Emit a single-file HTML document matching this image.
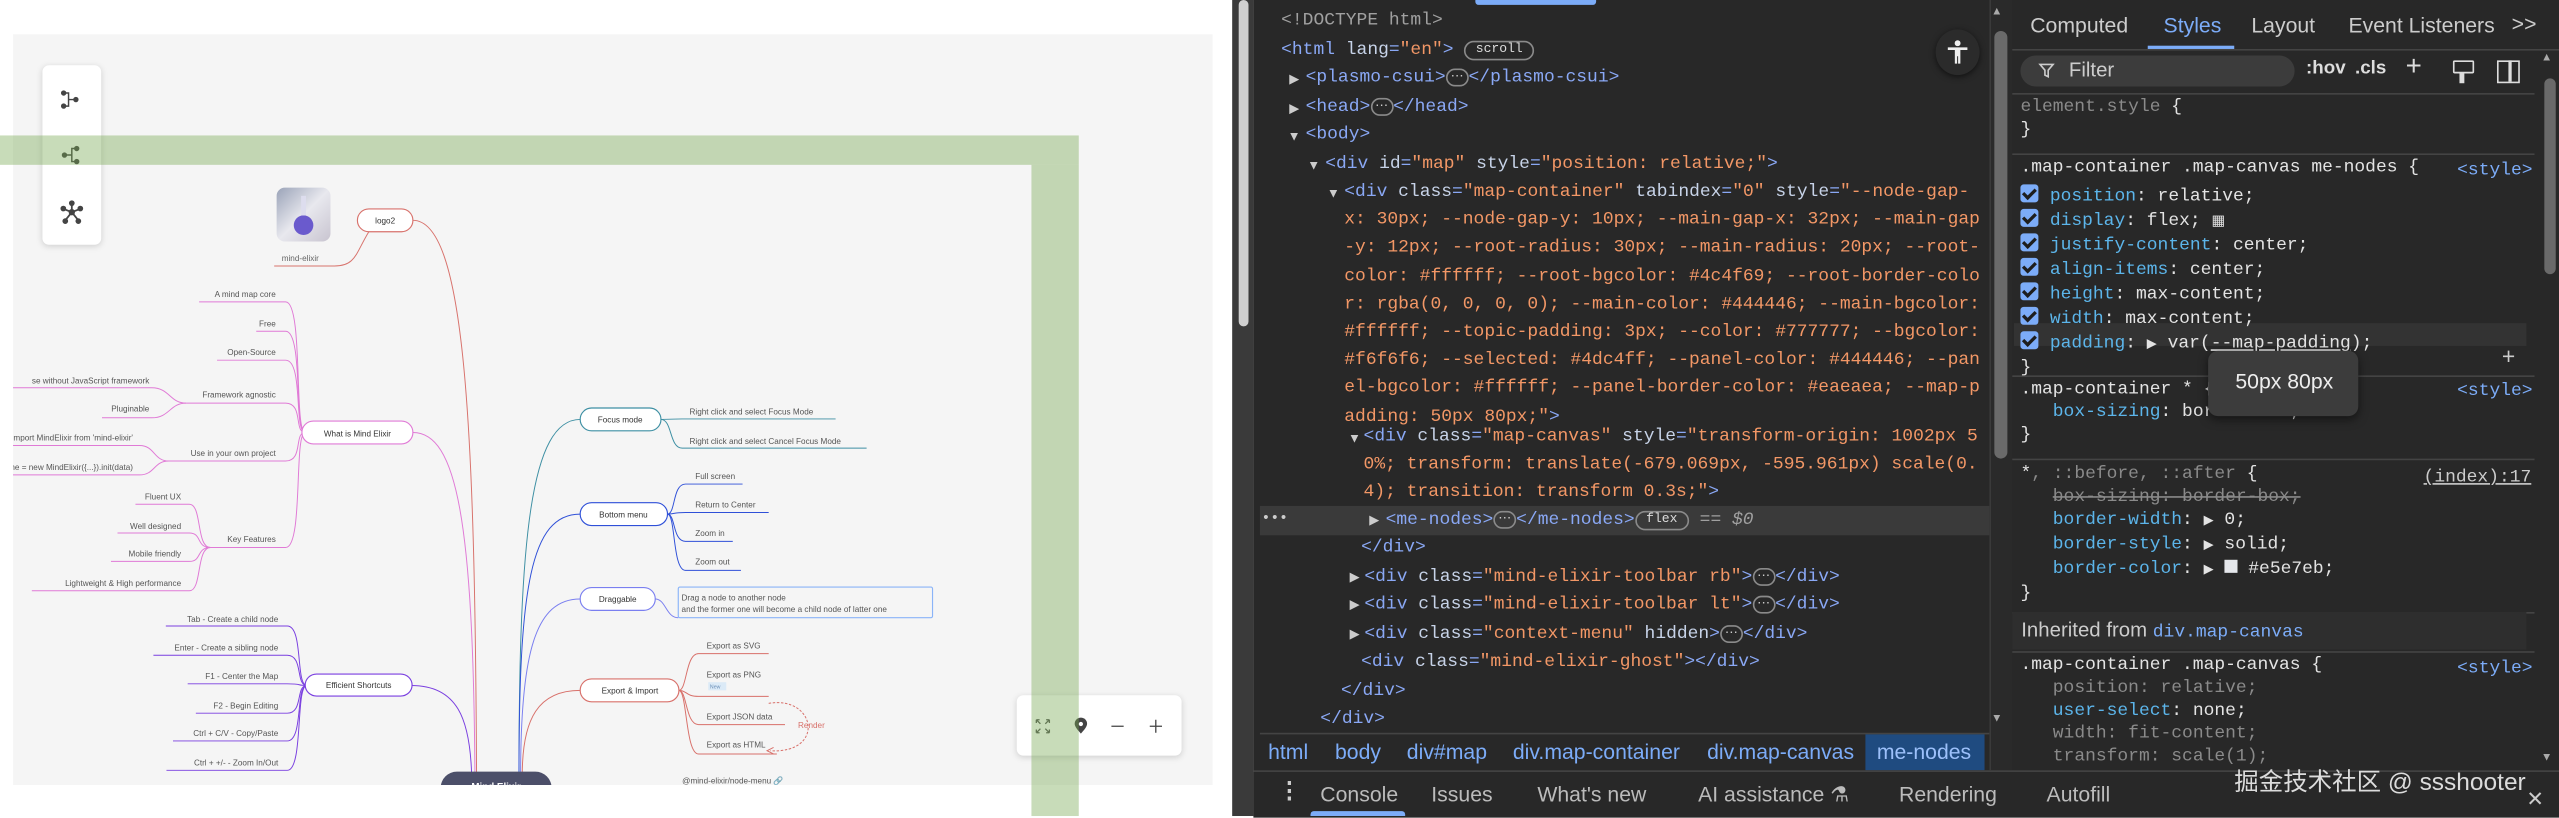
<!DOCTYPE html>
<html><head><meta charset="utf-8"><style>
html,body{margin:0;padding:0;width:2559px;height:816px;overflow:hidden;background:#fff}
#s{position:absolute;left:0;top:0;width:1568px;height:500px;transform:scale(1.63202);transform-origin:0 0;font-family:"Liberation Sans",sans-serif}
.a{position:absolute;white-space:pre}
.m{font-family:"Liberation Mono",monospace;font-size:11px;line-height:17.2px;color:#e3e3e3}
.t{color:#8aa8f5}.n{color:#c7d3e8}.v{color:#f29766}.g{color:#a0a0a0}
.b{display:inline-block;border:1px solid #8a8a8a;border-radius:7px;font-size:8px;line-height:9px;padding:0 2px;color:#ccc;vertical-align:1px}
.bd{display:inline-block;border:1px solid #8a8a8a;border-radius:7px;font-size:8px;line-height:10px;padding:0 6px;color:#ddd;vertical-align:1px}
.tri{position:absolute;font-size:8px;color:#ccc}
.sm{font-family:"Liberation Mono",monospace;font-size:11px;line-height:14px;color:#e3e3e3}
.p{color:#5cb5ea}.gr{color:#8a8a8a}
.cb{display:inline-block;width:11px;height:11px;background:#7cacf8;border-radius:2px;vertical-align:-1px;margin-right:7px;position:relative}
.cb:after{content:"";position:absolute;left:3px;top:1px;width:3px;height:6px;border:solid #1e1e1e;border-width:0 2px 2px 0;transform:rotate(45deg)}
.hr{position:absolute;left:1233px;width:320px;height:1px;background:#444}
</style></head><body><div id="s">
<!-- left page -->
<div class="a" style="left:0;top:0;width:757px;height:500px;background:#fff"></div>
<div class="a" style="left:8px;top:21px;width:735px;height:460px;background:#f5f5f5"></div>
<svg class="a" style="left:0;top:0" width="757" height="500" viewBox="0 0 757 500" font-family="Liberation Sans, sans-serif">
<defs><clipPath id="c"><rect x="8" y="21" width="735" height="460"/></clipPath></defs>
<g clip-path="url(#c)" fill="none" stroke-width="0.6">
<!-- main branches -->
<path d="M253,135 C285,135 291,260 292,475" stroke="#d8726c"/>
<path d="M253,265 C280,265 290,320 291,475" stroke="#e07ad6"/>
<path d="M252,420 C280,420 288,440 289,475" stroke="#7a3fe0"/>
<path d="M355.5,257 C325,257 318,330 318,475" stroke="#3d8fa3"/>
<path d="M355.5,315 C325,315 318,360 318,475" stroke="#2f50d8"/>
<path d="M355.5,367 C328,367 319,400 319,475" stroke="#7a7ff0"/>
<path d="M355.5,423 C330,423 320,440 320,475" stroke="#d8706a"/>
<!-- logo2 child -->
<path d="M226,142 C218,155 218,163 205,163 H168" stroke="#d8726c"/>
<!-- what is children -->
<g stroke="#e07ad6">
<path d="M187,265 C180,265 186,185 175,185 H122"/>
<path d="M187,265 C180,265 186,203 175,203 H157"/>
<path d="M187,265 C180,265 186,220.7 175,220.7 H133"/>
<path d="M187,265 C180,265 186,247 175,247 H114"/>
<path d="M187,265 C180,265 186,282.5 175,282.5 H103.5"/>
<path d="M187,265 C180,265 186,335.5 175,335.5 H129"/>
<path d="M114,247 C104,247 104,237.6 93,237.6 H0"/>
<path d="M114,247 C104,247 104,256 93,256 H62.5"/>
<path d="M103.5,282.5 C94,282.5 95,273 85.5,273 H0"/>
<path d="M103.5,282.5 C94,282.5 95,291 85.5,291 H0"/>
<path d="M129,335.5 C120,335.5 124,309 116,309 H83"/>
<path d="M129,335.5 C120,335.5 124,326.6 116,326.6 H72"/>
<path d="M129,335.5 C120,335.5 124,344 116,344 H68"/>
<path d="M129,335.5 C120,335.5 124,362 116,362 H19.5"/>
</g>
<g stroke="#7a3fe0">
<path d="M188,420 C181,420 186,383.6 176,383.6 H101.6"/>
<path d="M188,420 C181,420 186,401.5 176,401.5 H94"/>
<path d="M188,420 C181,420 186,419 176,419 H115"/>
<path d="M188,420 C181,420 186,437 176,437 H120"/>
<path d="M188,420 C181,420 186,454 176,454 H106"/>
<path d="M188,420 C181,420 186,472 176,472 H102"/>
</g>
<g stroke="#3d8fa3"><path d="M405,257 C412,257 410,256.7 418,256.7 H512"/><path d="M405,257 C412,257 410,274.6 418,274.6 H531"/></g>
<g stroke="#2f50d8">
<path d="M409,315 C414,315 412,296.6 420,296.6 H455"/>
<path d="M409,315 C414,315 412,314 420,314 H471"/>
<path d="M409,315 C414,315 412,331.7 420,331.7 H449"/>
<path d="M409,315 C414,315 412,349.5 420,349.5 H454"/>
</g>
<path d="M401.5,367 C408,367 408,378.5 415.6,378.5" stroke="#7a7ff0"/>
<g stroke="#d8706a">
<path d="M416,423 C421,423 420,400.5 428,400.5 H471"/>
<path d="M416,423 C421,423 420,426.7 428,426.7 H471"/>
<path d="M416,423 C421,423 420,444 428,444 H481"/>
<path d="M416,423 C421,423 420,462 428,462 H476"/>
<path d="M471,431 C500,426 506,462 472,460" stroke-dasharray="1.5,1"/>
<path d="M474,458 L470,460 L474,462" />
</g>
<!-- nodes -->
<g stroke-width="0.7" fill="#fff">
<rect x="219" y="128" width="34" height="14" rx="7" stroke="#d8726c"/>
<rect x="185" y="258" width="68" height="14" rx="7" stroke="#e07ad6"/>
<rect x="187" y="413" width="65.5" height="13.5" rx="7" stroke="#7a3fe0"/>
<rect x="355.5" y="250" width="49.5" height="14" rx="7" stroke="#3d8fa3"/>
<rect x="355.5" y="308" width="53.5" height="14" rx="7" stroke="#2f50d8"/>
<rect x="355.5" y="360" width="46" height="14" rx="7" stroke="#7a7ff0"/>
<rect x="355.5" y="416" width="60.5" height="14" rx="7" stroke="#d8706a"/>
<rect x="415.6" y="359.7" width="155.8" height="18.8" rx="1" stroke="#8ab4f8" fill="none"/>
</g>
<rect x="270" y="472.8" width="68" height="20" rx="10" fill="#4c4f69"/>
<text x="304" y="484" font-size="6" fill="#fff" text-anchor="middle" font-weight="bold">Mind Elixir</text>
<defs><linearGradient id="lg" x1="0" y1="0" x2="1" y2="1"><stop offset="0" stop-color="#9aa3b8"/><stop offset="0.5" stop-color="#e8e8ee"/><stop offset="1" stop-color="#c8c4d0"/></linearGradient></defs>
<rect x="169.5" y="115" width="33" height="33" rx="5" fill="url(#lg)" stroke="none"/>
<ellipse cx="186" cy="138" rx="6" ry="6" fill="#6a5acd" stroke="none"/>
<rect x="184.5" y="120" width="3" height="12" fill="#dde" stroke="none"/>
</g>
<g font-size="5" fill="#555" clip-path="url(#c)">
<text x="236" y="137" text-anchor="middle" fill="#333">logo2</text>
<text x="184" y="160" text-anchor="middle" fill="#666">mind-elixir</text>
<text x="219" y="267.5" text-anchor="middle" fill="#333">What is Mind Elixir</text>
<text x="219.8" y="421.5" text-anchor="middle" fill="#333">Efficient Shortcuts</text>
<text x="380" y="259" text-anchor="middle" fill="#333">Focus mode</text>
<text x="382" y="317" text-anchor="middle" fill="#333">Bottom menu</text>
<text x="378.5" y="369" text-anchor="middle" fill="#333">Draggable</text>
<text x="386" y="425" text-anchor="middle" fill="#333">Export &amp; Import</text>
<g text-anchor="end">
<text x="169" y="182">A mind map core</text>
<text x="169" y="200">Free</text>
<text x="169" y="217.5">Open-Source</text>
<text x="169" y="243.5">Framework agnostic</text>
<text x="91.5" y="235">se without JavaScript framework</text>
<text x="91.5" y="252">Pluginable</text>
<text x="169" y="279.5">Use in your own project</text>
<text x="81.5" y="270">import MindElixir from 'mind-elixir'</text>
<text x="81.5" y="288">const me = new MindElixir({...}).init(data)</text>
<text x="169" y="332">Key Features</text>
<text x="111" y="306">Fluent UX</text>
<text x="111" y="324">Well designed</text>
<text x="111" y="341">Mobile friendly</text>
<text x="111" y="359">Lightweight &amp; High performance</text>
<text x="170.5" y="381">Tab - Create a child node</text>
<text x="170.5" y="398.5">Enter - Create a sibling node</text>
<text x="170.5" y="416">F1 - Center the Map</text>
<text x="170.5" y="434">F2 - Begin Editing</text>
<text x="170.5" y="451">Ctrl + C/V - Copy/Paste</text>
<text x="170.5" y="469">Ctrl + +/- - Zoom In/Out</text>
</g>
<text x="422.5" y="254">Right click and select Focus Mode</text>
<text x="422.5" y="272">Right click and select Cancel Focus Mode</text>
<text x="426" y="293.5">Full screen</text>
<text x="426" y="311">Return to Center</text>
<text x="426" y="328.5">Zoom in</text>
<text x="426" y="346">Zoom out</text>
<text x="417.6" y="368">Drag a node to another node</text>
<text x="417.6" y="375">and the former one will become a child node of latter one</text>
<text x="433" y="397.5">Export as SVG</text>
<text x="433" y="415">Export as PNG</text>
<rect x="434" y="418" width="11" height="5" fill="#dbeaf7"/>
<text x="435" y="422" font-size="3.2" fill="#6a8fb8">New</text>
<text x="433" y="441">Export JSON data</text>
<text x="433" y="458">Export as HTML</text>
<text x="489" y="446" fill="#d8706a">Render</text>
<text x="418" y="480">@mind-elixir/node-menu 🔗</text>
</g>
</svg>
<!-- left toolbar -->
<div class="a" style="left:26px;top:40px;width:36px;height:110px;background:#fff;border-radius:4px;box-shadow:0 1px 4px rgba(0,0,0,.15)"></div>
<svg class="a" style="left:36px;top:55px" width="16" height="90" viewBox="0 0 16 90" fill="none" stroke="#444" stroke-width="0.9">
<path d="M3,2 H6 V10 H3 M6,6 H10"/><circle cx="3" cy="2" r="1.2" fill="#444"/><circle cx="3" cy="10" r="1.2" fill="#444"/><circle cx="10.5" cy="6" r="1.2" fill="#444"/>
<path d="M11,36 H8 V44 H11 M8,40 H4"/><circle cx="11" cy="36" r="1.2" fill="#444"/><circle cx="11" cy="44" r="1.2" fill="#444"/><circle cx="3.5" cy="40" r="1.2" fill="#444"/>
<path d="M8,75 V70 M8,75 L3,73 M8,75 L13,73 M8,75 L4,80 M8,75 L12,80" stroke-width="1.1"/><circle cx="8" cy="75" r="1.5" fill="#444"/><circle cx="8" cy="69.5" r="1.3" fill="#444"/><circle cx="2.8" cy="72.8" r="1.3" fill="#444"/><circle cx="13.2" cy="72.8" r="1.3" fill="#444"/><circle cx="4" cy="80.5" r="1.3" fill="#444"/><circle cx="12" cy="80.5" r="1.3" fill="#444"/>
</svg>
<!-- bottom right toolbar -->
<div class="a" style="left:623px;top:426px;width:101px;height:37px;background:#fff;border-radius:4px;box-shadow:0 1px 4px rgba(0,0,0,.15)"></div>
<svg class="a" style="left:623px;top:426px" width="101" height="37" viewBox="0 0 101 37" fill="none" stroke="#555" stroke-width="0.8">
<path d="M12,15 L14.5,17.5 M12,15 V17 M12,15 H14 M20,15 L17.5,17.5 M20,15 V17 M20,15 H18 M12,23 L14.5,20.5 M12,23 V21 M12,23 H14 M20,23 L17.5,20.5 M20,23 V21 M20,23 H18"/>
<path d="M39.3,23.5 C36,20 35.5,18.5 35.5,17.5 A3.8,3.8 0 0 1 43.1,17.5 C43.1,18.5 42.6,20 39.3,23.5Z" fill="#444" stroke="none"/><circle cx="39.3" cy="17.6" r="1.3" fill="#fff" stroke="none"/>
<path d="M58,19 H65.5 M81.5,19 H89 M85.2,15 V23" stroke="#444"/>
</svg>
<!-- green overlay -->
<div class="a" style="left:0;top:83px;width:661px;height:18px;background:rgba(117,168,80,.4)"></div>
<div class="a" style="left:632px;top:101px;width:29px;height:399px;background:rgba(117,168,80,.4)"></div>
<!-- page scrollbar -->
<div class="a" style="left:755px;top:0;width:13px;height:500px;background:#3a3a3a"></div>
<div class="a" style="left:759px;top:0;width:6px;height:200px;background:#cfcfcf;border-radius:3px"></div>

<!-- devtools elements -->
<div class="a" style="left:768px;top:0;width:800px;height:500px;background:#282828"></div>
<div class="a" style="left:904px;top:0;width:74px;height:2.5px;background:#7cacf8;border-radius:0 0 2px 2px"></div>
<div class="a" style="left:772px;top:310px;width:447px;height:18px;background:#3a3a3a"></div>
<div class="a m" style="left:773px;top:310px;color:#ccc;font-size:9px">•••</div>
<div class="a" style="left:1186px;top:18px;width:27px;height:28px;border-radius:50%;background:#2b2b2b;box-shadow:0 1px 4px rgba(0,0,0,.6)"></div>
<svg class="a" style="left:1192px;top:24px" width="15" height="16" viewBox="0 0 15 16" fill="#eee"><circle cx="7.5" cy="2.5" r="1.8"/><path d="M1.5,5 H13.5 V6.6 H9.2 V15 H7.8 V10.5 H7.2 V15 H5.8 V6.6 H1.5Z"/></svg>
<div class="a m" style="left:785px;top:5px"><span class="g">&lt;!DOCTYPE html&gt;</span></div>
<div class="a m" style="left:785px;top:23px"><span class="t">&lt;html </span><span class="n">lang</span><span class="t">=</span><span class="v">"en"</span><span class="t">&gt;</span> <span class="bd">scroll</span></div>
<div class="tri" style="left:790px;top:44px">▶</div>
<div class="a m" style="left:800px;top:40px"><span class="t">&lt;plasmo-csui&gt;</span><span class="b">⋯</span><span class="t">&lt;/plasmo-csui&gt;</span></div>
<div class="tri" style="left:790px;top:62px">▶</div>
<div class="a m" style="left:800px;top:58px"><span class="t">&lt;head&gt;</span><span class="b">⋯</span><span class="t">&lt;/head&gt;</span></div>
<div class="tri" style="left:789px;top:79px">▼</div>
<div class="a m" style="left:800px;top:75px"><span class="t">&lt;body&gt;</span></div>
<div class="tri" style="left:801px;top:97px">▼</div>
<div class="a m" style="left:812px;top:93px"><span class="t">&lt;div </span><span class="n">id</span><span class="t">=</span><span class="v">"map"</span> <span class="n">style</span><span class="t">=</span><span class="v">"position: relative;"</span><span class="t">&gt;</span></div>
<div class="tri" style="left:813px;top:114px">▼</div>
<div class="a m" style="left:823.7px;top:110px"><span class="t">&lt;div </span><span class="n">class</span><span class="t">=</span><span class="v">"map-container"</span> <span class="n">tabindex</span><span class="t">=</span><span class="v">"0"</span> <span class="n">style</span><span class="t">=</span><span class="v">"--node-gap-
x: 30px; --node-gap-y: 10px; --main-gap-x: 32px; --main-gap
-y: 12px; --root-radius: 30px; --main-radius: 20px; --root-
color: #ffffff; --root-bgcolor: #4c4f69; --root-border-colo
r: rgba(0, 0, 0, 0); --main-color: #444446; --main-bgcolor:
#ffffff; --topic-padding: 3px; --color: #777777; --bgcolor:
#f6f6f6; --selected: #4dc4ff; --panel-color: #444446; --pan
el-bgcolor: #ffffff; --panel-border-color: #eaeaea; --map-p
adding: 50px 80px;"</span><span class="t">&gt;</span></div>
<div class="tri" style="left:826px;top:264px">▼</div>
<div class="a m" style="left:835.5px;top:259.5px"><span class="t">&lt;div </span><span class="n">class</span><span class="t">=</span><span class="v">"map-canvas"</span> <span class="n">style</span><span class="t">=</span><span class="v">"transform-origin: 1002px 5
0%; transform: translate(-679.069px, -595.961px) scale(0.
4); transition: transform 0.3s;"</span><span class="t">&gt;</span></div>
<div class="tri" style="left:839px;top:314px">▶</div>
<div class="a m" style="left:849px;top:310.5px"><span class="t">&lt;me-nodes&gt;</span><span class="b">⋯</span><span class="t">&lt;/me-nodes&gt;</span><span class="bd">flex</span> <span class="g">== <i>$0</i></span></div>
<div class="a m" style="left:834px;top:328px"><span class="t">&lt;/div&gt;</span></div>
<div class="tri" style="left:827px;top:349px">▶</div>
<div class="a m" style="left:836px;top:345.5px"><span class="t">&lt;div </span><span class="n">class</span><span class="t">=</span><span class="v">"mind-elixir-toolbar rb"</span><span class="t">&gt;</span><span class="b">⋯</span><span class="t">&lt;/div&gt;</span></div>
<div class="tri" style="left:827px;top:366px">▶</div>
<div class="a m" style="left:836px;top:362.5px"><span class="t">&lt;div </span><span class="n">class</span><span class="t">=</span><span class="v">"mind-elixir-toolbar lt"</span><span class="t">&gt;</span><span class="b">⋯</span><span class="t">&lt;/div&gt;</span></div>
<div class="tri" style="left:827px;top:384px">▶</div>
<div class="a m" style="left:836px;top:380.5px"><span class="t">&lt;div </span><span class="n">class</span><span class="t">=</span><span class="v">"context-menu"</span> <span class="n">hidden</span><span class="t">&gt;</span><span class="b">⋯</span><span class="t">&lt;/div&gt;</span></div>
<div class="a m" style="left:834px;top:397.5px"><span class="t">&lt;div </span><span class="n">class</span><span class="t">=</span><span class="v">"mind-elixir-ghost"</span><span class="t">&gt;&lt;/div&gt;</span></div>
<div class="a m" style="left:821.7px;top:415.5px"><span class="t">&lt;/div&gt;</span></div>
<div class="a m" style="left:809px;top:433px"><span class="t">&lt;/div&gt;</span></div>
<!-- breadcrumb -->
<div class="a" style="left:772px;top:449px;width:447px;height:1px;background:#444"></div>
<div class="a" style="left:1143px;top:450px;width:73px;height:22px;background:#1f4b80"></div>
<div class="a" style="left:777px;top:452px;font-size:13px;line-height:18px;color:#7cacf8;word-spacing:0">html</div>
<div class="a" style="left:818px;top:452px;font-size:13px;line-height:18px;color:#7cacf8">body</div>
<div class="a" style="left:862px;top:452px;font-size:13px;line-height:18px;color:#7cacf8">div#map</div>
<div class="a" style="left:927px;top:452px;font-size:13px;line-height:18px;color:#7cacf8">div.map-container</div>
<div class="a" style="left:1046px;top:452px;font-size:13px;line-height:18px;color:#7cacf8">div.map-canvas</div>
<div class="a" style="left:1150px;top:452px;font-size:13px;line-height:18px;color:#9cc0fa">me-nodes</div>
<!-- elements scrollbar -->
<div class="a" style="left:1219px;top:0;width:14px;height:472px;background:#2a2a2a;border-left:1px solid #3a3a3a"></div>
<div class="a" style="left:1221.5px;top:19px;width:8px;height:262px;background:#6a6a6a;border-radius:4px"></div>
<div class="a" style="left:1220px;top:4px;font-size:7px;color:#aaa">▲</div>
<div class="a" style="left:1220px;top:437px;font-size:7px;color:#aaa">▼</div>
<!-- styles pane -->
<div class="a" style="left:1233px;top:0;width:335px;height:472px;background:#282828"></div>
<div class="a" style="left:1233px;top:30px;width:335px;height:1px;background:#444"></div>
<div class="a" style="left:1244px;top:8px;font-size:13px;color:#ccc">Computed</div>
<div class="a" style="left:1325.7px;top:8px;font-size:13px;color:#7cacf8">Styles</div>
<div class="a" style="left:1315.5px;top:28px;width:53px;height:2px;background:#7cacf8"></div>
<div class="a" style="left:1379.5px;top:8px;font-size:13px;color:#ccc">Layout</div>
<div class="a" style="left:1439px;top:8px;font-size:13px;color:#ccc">Event Listeners</div>
<div class="a" style="left:1539px;top:7px;font-size:13px;color:#ccc">&gt;&gt;</div>
<div class="a" style="left:1238px;top:34.4px;width:168px;height:19px;background:#3c3c3c;border-radius:10px"></div>
<svg class="a" style="left:1249px;top:38px" width="10" height="10" viewBox="0 0 10 10"><path d="M1,1.5 H9 L6,5 V9 L4,8 V5Z" fill="none" stroke="#ccc" stroke-width="1"/></svg>
<div class="a" style="left:1267.7px;top:36px;font-size:12.5px;color:#ccc">Filter</div>
<div class="a" style="left:1413px;top:36px;font-size:11.5px;color:#ddd;font-weight:bold">:hov</div>
<div class="a" style="left:1443px;top:36px;font-size:11.5px;color:#ddd;font-weight:bold">.cls</div>
<div class="a" style="left:1474px;top:31px;font-size:17px;color:#ddd">+</div>
<div class="a" style="left:1503px;top:37px;width:11px;height:6px;border:1.5px solid #ddd;border-radius:1px"></div>
<div class="a" style="left:1507px;top:45px;width:3px;height:6px;background:#ddd"></div>
<div class="a" style="left:1530px;top:37px;width:12px;height:12px;border:1.5px solid #ddd"></div>
<div class="a" style="left:1537px;top:37px;width:1.5px;height:13px;background:#ddd"></div>
<div class="hr" style="top:57px"></div>
<div class="a sm" style="left:1238px;top:59px"><span class="gr">element.style</span> {
}</div>
<div class="hr" style="top:94px"></div>
<div class="a sm" style="left:1238px;top:96px">.map-container .map-canvas me-nodes {</div>
<div class="a sm" style="left:1505.6px;top:98px;color:#7cacf8">&lt;style&gt;</div>
<div class="a" style="left:1234px;top:198px;width:314px;height:14px;background:#333"></div>
<div class="a sm" style="left:1238px;top:113px"><span class="cb"></span><span class="p">position</span>: relative;
<span class="cb"></span><span class="p">display</span>: flex; <span style="font-size:9px;letter-spacing:-1px">▦</span>
<span class="cb"></span><span class="p">justify-content</span>: center;
<span class="cb"></span><span class="p">align-items</span>: center;
<span class="cb"></span><span class="p">height</span>: max-content;
<span class="cb"></span><span class="p">width</span>: max-content;
<span class="cb"></span><span class="p">padding</span>: <span style="font-size:8px">▶</span> var(<span style="text-decoration:underline">--map-padding</span>);
}</div>
<div class="a" style="left:1533px;top:210px;font-size:14px;color:#ccc">+</div>
<div class="hr" style="top:230px"></div>
<div class="a sm" style="left:1238px;top:231.5px">.map-container * {
   <span class="p">box-sizing</span>: border-box;
}</div>
<div class="a sm" style="left:1505.6px;top:233px;color:#7cacf8">&lt;style&gt;</div>
<div class="a" style="left:1352.8px;top:214.6px;width:92px;height:40px;background:#3c3c3c;border-radius:6px;box-shadow:0 2px 6px rgba(0,0,0,.5)"></div>
<div class="a" style="left:1369.7px;top:226px;font-size:13px;color:#eee">50px 80px</div>
<div class="hr" style="top:281px"></div>
<div class="a sm" style="left:1238px;top:284px">*<span class="gr">, ::before, ::after</span> {
   <span class="gr" style="text-decoration:line-through">box-sizing: border-box;</span>
   <span class="p">border-width</span>: <span style="font-size:8px">▶</span> 0;
   <span class="p">border-style</span>: <span style="font-size:8px">▶</span> solid;
   <span class="p">border-color</span>: <span style="font-size:8px">▶</span> <span style="display:inline-block;width:8px;height:8px;background:#e5e7eb"></span> #e5e7eb;
}</div>
<div class="a sm" style="left:1485px;top:286px;color:#ccc;text-decoration:underline">(index):17</div>
<div class="hr" style="top:374.7px"></div>
<div class="a" style="left:1233px;top:375px;width:315px;height:23px;background:#2e2e2e"></div>
<div class="a" style="left:1238.5px;top:379px;font-size:12.5px;color:#ccc">Inherited from <span style="font-family:'Liberation Mono',monospace;font-size:11px;color:#7cacf8">div.map-canvas</span></div>
<div class="hr" style="top:398.6px"></div>
<div class="a sm" style="left:1238px;top:401px">.map-container .map-canvas {
   <span class="gr">position: relative;</span>
   <span class="p">user-select</span>: none;
   <span class="gr">width: fit-content;</span>
   <span class="gr">transform: scale(1);</span></div>
<div class="a sm" style="left:1505.6px;top:403px;color:#7cacf8">&lt;style&gt;</div>
<div class="a" style="left:1556px;top:32px;width:12px;height:440px;background:#282828"></div>
<div class="a" style="left:1558.5px;top:47.8px;width:7px;height:120px;background:#6a6a6a;border-radius:4px"></div>
<div class="a" style="left:1557px;top:32px;font-size:7px;color:#aaa">▲</div>
<div class="a" style="left:1557px;top:461px;font-size:7px;color:#aaa">▼</div>
<!-- drawer tabs -->
<div class="a" style="left:768px;top:472px;width:800px;height:28px;background:#282828;border-top:1px solid #444"></div>
<div class="a" style="left:783px;top:476px;font-size:14px;color:#ccc;font-weight:bold">⋮</div>
<div class="a" style="left:809px;top:479px;font-size:13px;color:#bbb">Console</div>
<div class="a" style="left:803px;top:497px;width:58px;height:3px;background:#7cacf8;border-radius:2px 2px 0 0"></div>
<div class="a" style="left:877px;top:479px;font-size:13px;color:#bbb">Issues</div>
<div class="a" style="left:942px;top:479px;font-size:13px;color:#bbb">What's new</div>
<div class="a" style="left:1040.5px;top:479px;font-size:13px;color:#bbb">AI assistance ⚗</div>
<div class="a" style="left:1163.6px;top:479px;font-size:13px;color:#bbb">Rendering</div>
<div class="a" style="left:1254px;top:479px;font-size:13px;color:#bbb">Autofill</div>
<div class="a" style="left:1369px;top:468px;font-size:15px;color:#dcdcdc;font-family:'Liberation Sans','Noto Sans CJK SC',sans-serif">掘金技术社区 @ ssshooter</div>
<div class="a" style="left:1548px;top:482px;font-size:13px;color:#ccc">✕</div>
</div></body></html>
